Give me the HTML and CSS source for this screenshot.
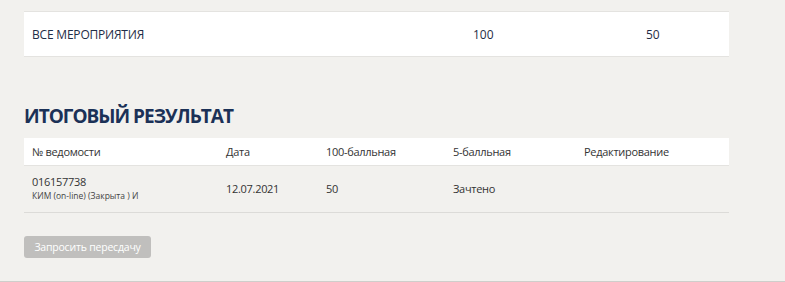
FILE: index.html
```html
<!DOCTYPE html>
<html lang="ru">
<head>
<meta charset="UTF-8">
<title>Итоговый результат</title>
<link rel="stylesheet" href="styles.css">
</head>
<body>

<div class="page">
  <div class="total-card">
    <div class="total-name">ВСЕ МЕРОПРИЯТИЯ</div>
    <div class="total-max">100</div>
    <div class="total-score">50</div>
  </div>

  <h2 class="section-title">ИТОГОВЫЙ РЕЗУЛЬТАТ</h2>

  <table class="result-table">
    <thead>
      <tr>
        <th class="col-num">№ ведомости</th>
        <th class="col-date">Дата</th>
        <th class="col-100">100-балльная</th>
        <th class="col-5">5-балльная</th>
        <th class="col-edit">Редактирование</th>
      </tr>
    </thead>
    <tbody>
      <tr>
        <td>
          <div class="sheet-num">016157738</div>
          <div class="sheet-info">КИМ (on-line) (Закрыта ) И</div>
        </td>
        <td>12.07.2021</td>
        <td>50</td>
        <td>Зачтено</td>
        <td></td>
      </tr>
    </tbody>
  </table>

  <button class="retake-btn" type="button" disabled>Запросить пересдачу</button>
</div>
<div class="footer-line"></div>

</body>
</html>
```
FILE: styles.css
```css
body {
  margin: 0;
  padding: 0;
  background-color: #f2f1ee;
  font-family: "Open Sans", "Noto Sans", sans-serif;
  color: #333;
}

.page {
  width: 705px;
  margin-left: 24px;
  padding-top: 11px;
  height: 270px;
}

.total-card {
  display: flex;
  align-items: center;
  height: 44px;
  background-color: #fff;
  border-top: 1px solid #e4e3e0;
  border-bottom: 1px solid #e4e3e0;
  font-size: 12px;
  color: #1f2d46;
}

.total-name {
  width: 441px;
  padding-left: 8px;
  letter-spacing: -0.2px;
}

.total-max {
  width: 173px;
}

.total-score {
  flex: 1;
}

.section-title {
  margin: 46px 0 0 0;
  font-size: 19px;
  line-height: 26px;
  font-weight: 700;
  color: #1b3157;
  letter-spacing: -1px;
}

.result-table {
  width: 100%;
  margin-top: 9px;
  border-collapse: collapse;
  font-size: 11px;
  letter-spacing: -0.3px;
}

.result-table th,
.result-table td {
  box-sizing: border-box;
}

.result-table th {
  text-align: left;
  font-weight: 400;
  background-color: #fff;
  height: 27px;
  padding: 0 0 0 8px;
  border-bottom: 1px solid #e4e3e0;
  color: #333;
}

.result-table td {
  height: 47px;
  padding: 0 0 0 8px;
  border-bottom: 1px solid #dcdbd8;
  vertical-align: middle;
  color: #333;
}

.col-num { width: 194px; }
.col-date { width: 100px; }
.col-100 { width: 127px; }
.col-5 { width: 131px; }

.sheet-num {
  font-size: 11px;
  line-height: 15px;
}

.sheet-info {
  font-size: 8.5px;
  line-height: 14px;
  color: #444;
  letter-spacing: 0;
}

.retake-btn {
  display: block;
  margin-top: 23px;
  width: 127px;
  height: 22px;
  padding: 0;
  border: none;
  border-radius: 3px;
  background-color: #c0bfbd;
  color: #fff;
  font-family: "Open Sans", "Noto Sans", sans-serif;
  font-size: 10.5px;
  letter-spacing: -0.2px;
}

.footer-line {
  height: 1px;
  background-color: #cfcecb;
}
```
